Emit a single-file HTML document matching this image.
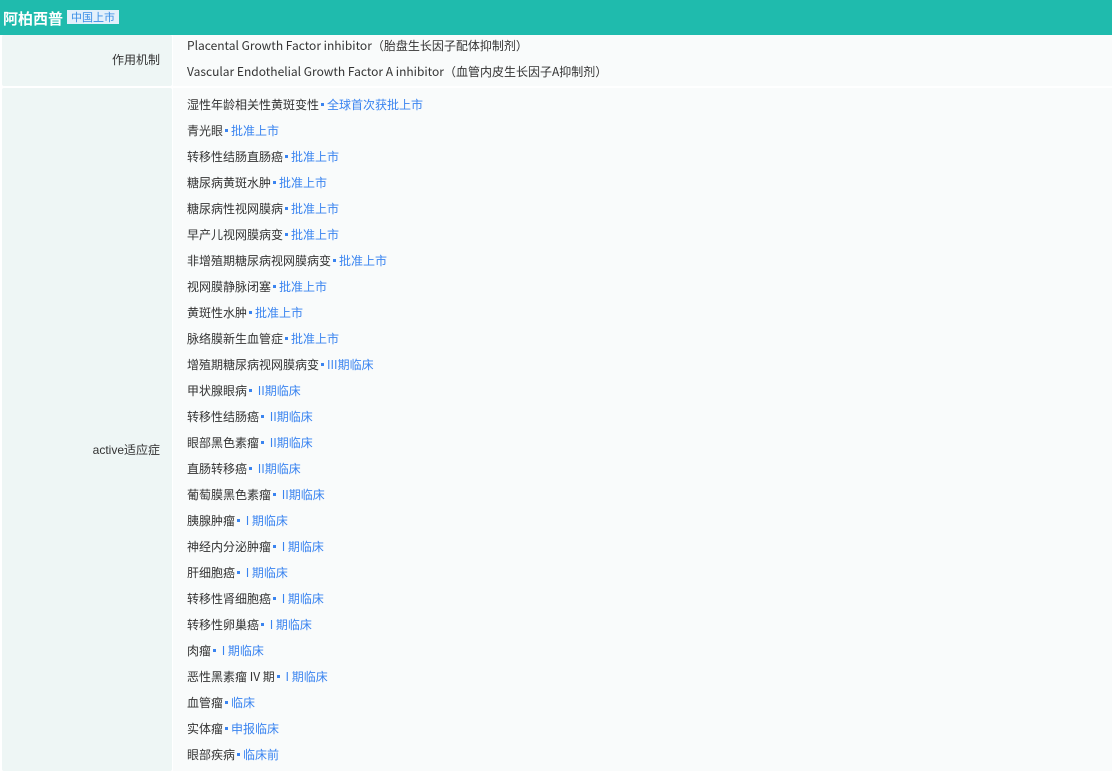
<html><head><style>
body{margin:0;width:1112px;height:771px;overflow:hidden;background:#fff;font-family:"Liberation Sans","Noto Sans CJK SC",sans-serif;font-size:12px;color:#333}
.hd{height:35px;background:#1fbbad;position:relative}
.hd b{position:absolute;left:3px;top:8px;color:#fff;font-size:15px;font-family:"Noto Sans CJK SC",sans-serif}
.hd span{position:absolute;left:67px;top:10px;background:#e3f0fb;color:#3a8ee6;font-size:11px;padding:0 4px;line-height:14px;font-family:"Noto Sans CJK SC",sans-serif}
.row{position:absolute;left:2px;right:0;display:flex}
.l{width:170px;background:#eef6f5;display:flex;align-items:center;justify-content:flex-end;padding-right:12px;box-sizing:border-box;border-radius:2px}
.r{flex:1;background:#f9fbfb;margin-left:1px;padding:0 0 0 14px;font-family:"Noto Sans CJK SC",sans-serif}
.r div{line-height:26px;height:26px}
.r i{font-style:normal;color:#3a84f0}
.r i:before{content:"";display:inline-block;width:3px;height:3px;background:#3a84f0;margin:0 3px 0 2px;vertical-align:3px}
</style></head><body>
<div class="hd"><b>阿柏西普</b><span>中国上市</span></div>
<div class="row" style="top:35px;height:51px"><div class="l"><span style="position:relative;top:-1px">作用机制</span></div><div class="r"><div style="margin-top:-2px">Placental Growth Factor inhibitor（胎盘生长因子配体抑制剂）</div><div>Vascular Endothelial Growth Factor A inhibitor（血管内皮生长因子A抑制剂）</div></div></div>
<div class="row" style="top:88px;height:683px"><div class="l"><span style="position:relative;top:20px">active适应症</span></div><div class="r" style="padding-top:4px">
<div>湿性年龄相关性黄斑变性<i>全球首次获批上市</i></div>
<div>青光眼<i>批准上市</i></div>
<div>转移性结肠直肠癌<i>批准上市</i></div>
<div>糖尿病黄斑水肿<i>批准上市</i></div>
<div>糖尿病性视网膜病<i>批准上市</i></div>
<div>早产儿视网膜病变<i>批准上市</i></div>
<div>非增殖期糖尿病视网膜病变<i>批准上市</i></div>
<div>视网膜静脉闭塞<i>批准上市</i></div>
<div>黄斑性水肿<i>批准上市</i></div>
<div>脉络膜新生血管症<i>批准上市</i></div>
<div>增殖期糖尿病视网膜病变<i>III期临床</i></div>
<div>甲状腺眼病<i> II期临床</i></div>
<div>转移性结肠癌<i> II期临床</i></div>
<div>眼部黑色素瘤<i> II期临床</i></div>
<div>直肠转移癌<i> II期临床</i></div>
<div>葡萄膜黑色素瘤<i> II期临床</i></div>
<div>胰腺肿瘤<i> I 期临床</i></div>
<div>神经内分泌肿瘤<i> I 期临床</i></div>
<div>肝细胞癌<i> I 期临床</i></div>
<div>转移性肾细胞癌<i> I 期临床</i></div>
<div>转移性卵巢癌<i> I 期临床</i></div>
<div>肉瘤<i> I 期临床</i></div>
<div>恶性黑素瘤 IV 期<i> I 期临床</i></div>
<div>血管瘤<i>临床</i></div>
<div>实体瘤<i>申报临床</i></div>
<div>眼部疾病<i>临床前</i></div>
</div></div>
</body></html>
